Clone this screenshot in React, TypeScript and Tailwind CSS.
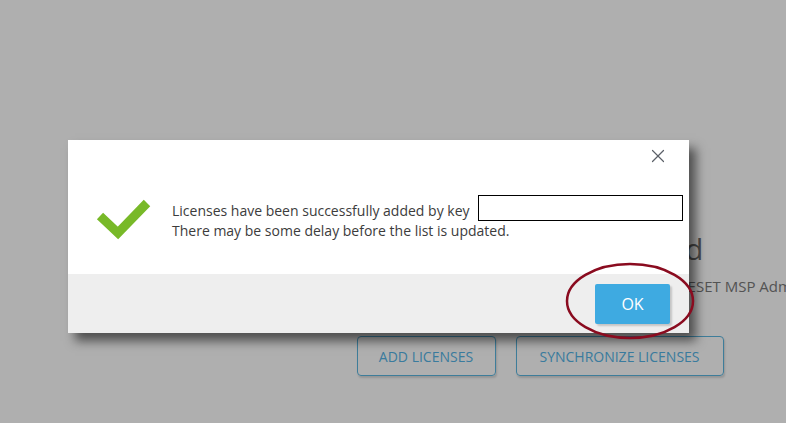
import { X } from 'lucide-react';

const FONT = { fontFamily: '"Open Sans", "Noto Sans", sans-serif' };

function CheckMark() {
  return (
    <svg width="60" height="46" viewBox="0 0 60 46" aria-hidden>
      <path d="M5 21 L23 38 L52 8" fill="none" stroke="#78b928" strokeWidth="9" strokeLinejoin="miter" />
    </svg>
  );
}

export default function App() {
  return (
    <div className="relative h-[423px] w-[786px] overflow-hidden bg-white" style={FONT}>
      {/* page behind the overlay */}
      <div className="flex h-full flex-col items-center pl-[294px] pt-[232px]">
        <h1 className="whitespace-nowrap text-[30px] font-normal leading-[34px] text-[#6e6e6e]">
          No licenses were found
        </h1>
        <p className="mt-[10px] whitespace-nowrap text-[15px] leading-5 text-[#7a7a7a]">
          Add new licenses manually by key or synchronize all licenses from ESET MSP Administrator
        </p>
        <div className="mt-[40px] flex gap-5">
          <button className="h-[40px] w-[139px] rounded-[4px] border border-[#5bb6e0] text-[14px] uppercase text-[#55b4e6] shadow-[1px_2px_2px_rgba(0,0,0,0.15)]">
            Add licenses
          </button>
          <button className="h-[40px] w-[208px] rounded-[4px] border border-[#5bb6e0] text-[14px] uppercase text-[#55b4e6] shadow-[1px_2px_2px_rgba(0,0,0,0.15)]">
            Synchronize licenses
          </button>
        </div>
      </div>

      {/* overlay */}
      <div className="absolute inset-0 bg-black/[0.314]" />

      {/* dialog */}
      <div className="absolute left-[68px] top-[140px] flex h-[193px] w-[621px] flex-col bg-white shadow-[7px_8px_10px_rgba(0,0,0,0.55)]">
        <div className="flex justify-end pr-[20px] pt-[5px]">
          <X className="h-[22px] w-[22px] text-[#5b6068]" strokeWidth={1.3} />
        </div>
        <div className="flex flex-1 items-center pb-[6px] pl-[27px]">
          <CheckMark />
          <div className="ml-[17px] text-[14px] leading-5 text-[#3c3c3c]">
            <div className="flex items-end">
              <span>Licenses have been successfully added by key</span>
              <span className="ml-[8px] inline-block h-[26px] w-[205px] border-[1.5px] border-black" />
            </div>
            <div>There may be some delay before the list is updated.</div>
          </div>
        </div>
        <div className="flex h-[59px] items-center justify-end bg-[#eeeeee] pr-[19px]">
          <button className="h-[40px] w-[75px] rounded-[2px] bg-[#3eaae1] text-[16px] text-white shadow-[2px_2px_2px_rgba(0,0,0,0.18)]">
            OK
          </button>
        </div>
      </div>

      {/* annotation ellipse */}
      <svg className="absolute left-[564px] top-[261px]" width="132" height="80" viewBox="0 0 132 80" aria-hidden>
        <ellipse cx="66" cy="40" rx="63" ry="37" fill="none" stroke="#8a0b1f" strokeWidth="2.5" />
      </svg>
    </div>
  );
}
